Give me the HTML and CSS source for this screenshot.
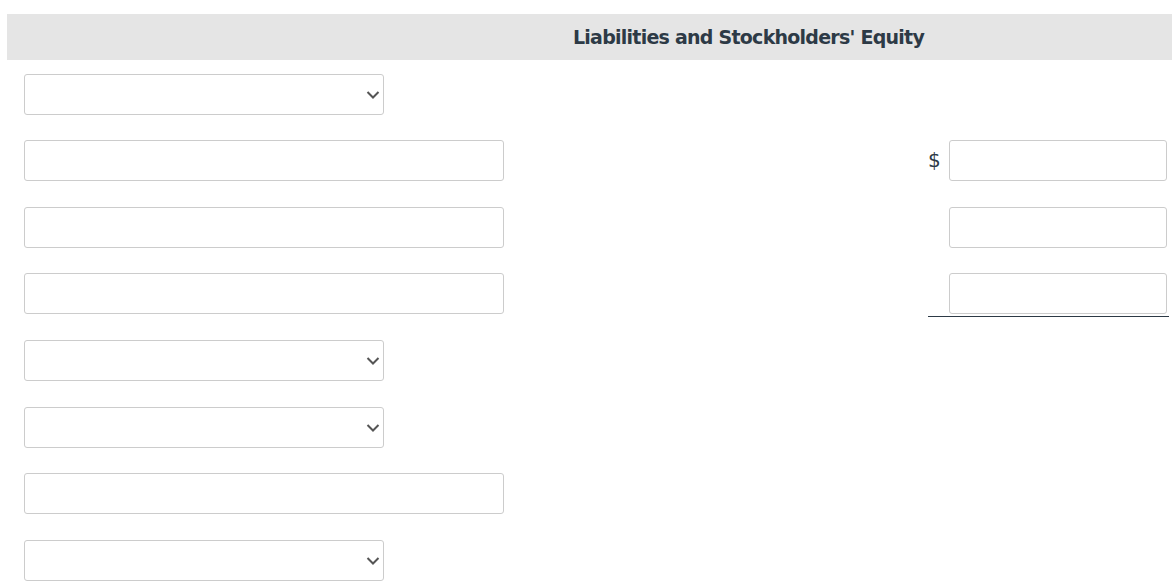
FILE: index.html
```html
<!DOCTYPE html>
<html>
<head>
<meta charset="utf-8">
<link rel="stylesheet" href="styles.css">
</head>
<body>
<div class="sheet">
  <div class="header"><span class="title">Liabilities and Stockholders' Equity</span></div>
  <div class="rows">
    <div class="row">
      <div class="left"><div class="sel"><select class="select"><option></option></select><svg class="chev" width="14" height="10" viewBox="0 0 14 10"><polyline points="1.5,2 7,7.5 12.5,2" fill="none" stroke="#555" stroke-width="2"/></svg></div></div>
      <div class="right"></div>
    </div>
    <div class="row">
      <div class="left"><input class="text wide" type="text"></div>
      <div class="right"><span class="cur">$</span><input class="text amt" type="text"></div>
    </div>
    <div class="row">
      <div class="left"><input class="text wide" type="text"></div>
      <div class="right"><span class="cur"></span><input class="text amt" type="text"></div>
    </div>
    <div class="row">
      <div class="left"><input class="text wide" type="text"></div>
      <div class="right total"><span class="cur"></span><input class="text amt" type="text"></div>
    </div>
    <div class="row">
      <div class="left"><div class="sel"><select class="select"><option></option></select><svg class="chev" width="14" height="10" viewBox="0 0 14 10"><polyline points="1.5,2 7,7.5 12.5,2" fill="none" stroke="#555" stroke-width="2"/></svg></div></div>
      <div class="right"></div>
    </div>
    <div class="row">
      <div class="left"><div class="sel"><select class="select"><option></option></select><svg class="chev" width="14" height="10" viewBox="0 0 14 10"><polyline points="1.5,2 7,7.5 12.5,2" fill="none" stroke="#555" stroke-width="2"/></svg></div></div>
      <div class="right"></div>
    </div>
    <div class="row">
      <div class="left"><input class="text wide" type="text"></div>
      <div class="right"></div>
    </div>
    <div class="row">
      <div class="left"><div class="sel"><select class="select"><option></option></select><svg class="chev" width="14" height="10" viewBox="0 0 14 10"><polyline points="1.5,2 7,7.5 12.5,2" fill="none" stroke="#555" stroke-width="2"/></svg></div></div>
      <div class="right"></div>
    </div>
  </div>
</div>
</body>
</html>
```
FILE: styles.css
```css
html, body {
  margin: 0;
  padding: 0;
  background: #fff;
}
body {
  font-family: "DejaVu Sans", Verdana, sans-serif;
  color: #2d3a46;
  overflow: hidden;
}
.sheet {
  padding: 14px 0 0 7px;
}
.header {
  height: 46px;
  background: #e5e5e5;
  display: flex;
  align-items: center;
  padding-left: 566px;
}
.title {
  font-weight: bold;
  font-size: 19px;
  letter-spacing: -0.75px;
  color: #2d3a46;
  white-space: nowrap;
}
.rows {
  padding: 13.6px 0 0 17px;
}
.row {
  height: 66.6px;
  display: flex;
  align-items: flex-start;
}
.left {
  width: 904px;
}
.right {
  width: 241px;
  display: flex;
  align-items: center;
}
.right.total {
  padding-bottom: 2px;
  border-bottom: 1px solid #2d3a46;
}
.cur {
  width: 21px;
  font-size: 20px;
  color: #2d3a46;
  line-height: 41px;
}
.sel {
  position: relative;
  width: 360px;
  height: 41px;
}
.select {
  appearance: none;
  -webkit-appearance: none;
  width: 360px;
  height: 41px;
  margin: 0;
  border: 1px solid #cccccc;
  border-radius: 3px;
  background: #fff;
  box-sizing: border-box;
  display: block;
}
.chev {
  position: absolute;
  right: 4px;
  top: 16px;
  pointer-events: none;
}
.text {
  height: 41px;
  margin: 0;
  padding: 0 8px;
  border: 1px solid #cccccc;
  border-radius: 3px;
  background: #fff;
  box-sizing: border-box;
  display: block;
  outline: none;
}
.wide {
  width: 480px;
}
.amt {
  width: 218px;
}
```
